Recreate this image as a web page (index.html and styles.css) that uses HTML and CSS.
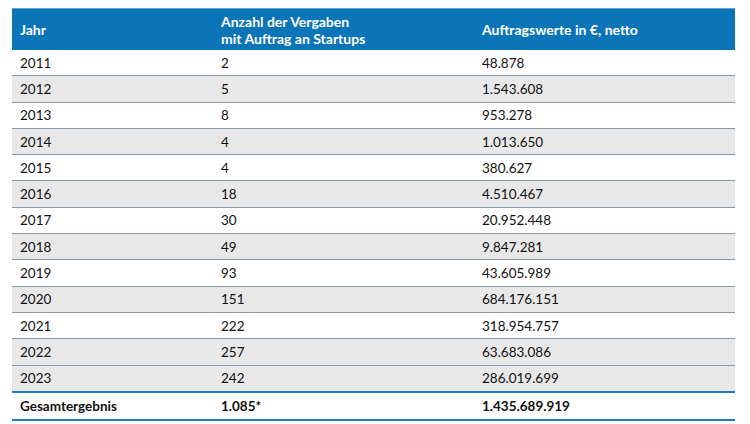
FILE: index.html
```html
<!DOCTYPE html>
<html lang="de">
<head>
<meta charset="utf-8">
<title>Vergaben an Startups</title>
<link rel="stylesheet" href="styles.css">
</head>
<body>
<div class="table">
  <div class="row head">
    <div class="cell">Jahr</div>
    <div class="cell">Anzahl der Vergaben<br>mit Auftrag an Startups</div>
    <div class="cell">Auftragswerte in €, netto</div>
  </div>
  <div class="row"><div class="cell">2011</div><div class="cell">2</div><div class="cell">48.878</div></div>
  <div class="row alt"><div class="cell">2012</div><div class="cell">5</div><div class="cell">1.543.608</div></div>
  <div class="row"><div class="cell">2013</div><div class="cell">8</div><div class="cell">953.278</div></div>
  <div class="row alt"><div class="cell">2014</div><div class="cell">4</div><div class="cell">1.013.650</div></div>
  <div class="row"><div class="cell">2015</div><div class="cell">4</div><div class="cell">380.627</div></div>
  <div class="row alt"><div class="cell">2016</div><div class="cell">18</div><div class="cell">4.510.467</div></div>
  <div class="row"><div class="cell">2017</div><div class="cell">30</div><div class="cell">20.952.448</div></div>
  <div class="row alt"><div class="cell">2018</div><div class="cell">49</div><div class="cell">9.847.281</div></div>
  <div class="row"><div class="cell">2019</div><div class="cell">93</div><div class="cell">43.605.989</div></div>
  <div class="row alt"><div class="cell">2020</div><div class="cell">151</div><div class="cell">684.176.151</div></div>
  <div class="row"><div class="cell">2021</div><div class="cell">222</div><div class="cell">318.954.757</div></div>
  <div class="row alt"><div class="cell">2022</div><div class="cell">257</div><div class="cell">63.683.086</div></div>
  <div class="row alt last"><div class="cell">2023</div><div class="cell">242</div><div class="cell">286.019.699</div></div>
  <div class="row total"><div class="cell">Gesamtergebnis</div><div class="cell">1.085*</div><div class="cell">1.435.689.919</div></div>
</div>
</body>
</html>
```
FILE: styles.css
```css
html, body {
  margin: 0;
  padding: 0;
  background: #ffffff;
}
body {
  font-family: Lato, "Open Sans", sans-serif;
  font-size: 13.5px;
  color: #111111;
}
.table {
  margin: 8px 15px 0 12px;
  display: flex;
  flex-direction: column;
}
.row {
  display: grid;
  grid-template-columns: 201px 261px 1fr;
  align-items: center;
  box-sizing: border-box;
  height: 26.3px;
  border-bottom: 1px solid #8a98ab;
}
.cell {
  padding-left: 8px;
}
.alt {
  background: #e8e8e8;
}
.head {
  height: 42px;
  background: #0b75b8;
  border-top: 1px solid #5ea3d3;
  border-bottom: none;
  color: #ffffff;
  font-size: 14px;
  font-weight: 700;
  line-height: 17px;
}
.last {
  border-bottom: 2px solid #1d7cc3;
  height: 27.3px;
}
.total {
  font-weight: 700;
  height: 28px;
  border-bottom: 2px solid #1d7cc3;
}
```
